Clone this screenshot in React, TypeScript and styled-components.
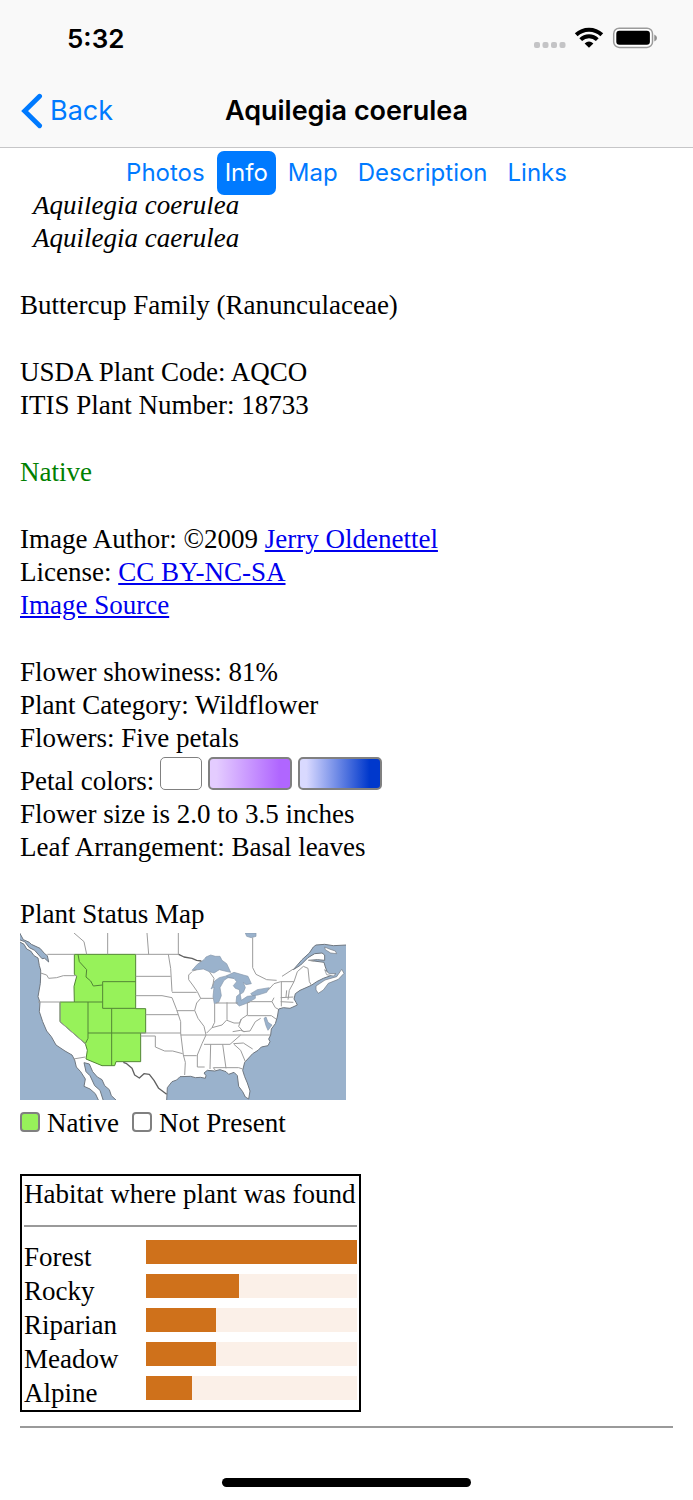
import React from "react";
import styled, { createGlobalStyle } from "styled-components";

const GlobalStyle = createGlobalStyle`
  *, *::before, *::after { box-sizing: border-box; }
  body { margin: 0; background: #fff; }
`;

const UI_FONT = `Inter, "Liberation Sans", sans-serif`;
const BLUE = "#007aff";

const Page = styled.div`
  display: flex;
  flex-direction: column;
  min-height: 100vh;
  background: #fff;
  color: #000;
  font-family: "Liberation Serif", "Times New Roman", serif;
  font-size: 27px;
  line-height: 33px;
`;

const TopBars = styled.div`
  position: sticky;
  top: 0;
  z-index: 1;
  background: #fff;
  font-family: ${UI_FONT};
`;

const Chrome = styled.header`
  background: #f9f9f9;
  border-bottom: 1px solid #c6c6c8;
`;

const StatusBar = styled.div`
  display: flex;
  align-items: center;
  justify-content: space-between;
  height: 76px;
  padding: 0 36px 0 67px;
`;

const Clock = styled.time`
  font-size: 26px;
  font-weight: 600;
`;

const NavBar = styled.div`
  display: grid;
  grid-template-columns: 1fr auto 1fr;
  align-items: center;
  height: 71px;
  padding: 0 21px 2px;
`;

const BackButton = styled.button`
  display: flex;
  align-items: center;
  justify-self: start;
  gap: 7px;
  padding: 0;
  border: 0;
  background: none;
  color: ${BLUE};
  font: 400 27px/33px ${UI_FONT};
  cursor: pointer;
`;

const Title = styled.h1`
  margin: 0;
  font-size: 27px;
  font-weight: 600;
`;

const Tabs = styled.nav`
  display: flex;
  justify-content: center;
  gap: 4px;
  padding: 3px 0 2px;
`;

const Tab = styled.button<{ $active?: boolean }>`
  height: 44px;
  padding: 0 8px;
  border: 0;
  border-radius: 7px;
  background: ${(p) => (p.$active ? BLUE : "transparent")};
  color: ${(p) => (p.$active ? "#fff" : BLUE)};
  font: 400 24px/44px ${UI_FONT};
  cursor: pointer;
`;

const Content = styled.main`
  flex: 1;
  margin-top: -8px;
  padding: 0 20px;
`;

const Block = styled.p`
  margin: 0 0 34px;
`;

const Synonyms = styled(Block)`
  padding-left: 13px;
  font-style: italic;
`;

const Line = styled.span`
  display: block;
`;

const NativeStatus = styled(Block)`
  color: #008000;
`;

const Link = styled.a`
  color: #0000ee;
  text-decoration: underline;
`;

const PetalRow = styled.span`
  display: flex;
  align-items: baseline;
  gap: 6px;
  padding-top: 2px;
`;

const Swatch = styled.span<{ $fill: string; $wide?: boolean }>`
  width: ${(p) => (p.$wide ? 84 : 42)}px;
  height: 33px;
  border: ${(p) => (p.$wide ? 2 : 1)}px solid #808080;
  border-radius: 5px;
  background: ${(p) => p.$fill};
  background-origin: border-box;
`;

const StatusMap = styled.figure`
  margin: 0 0 34px;
`;

const MapDrawing = styled.svg`
  display: block;
  width: 326px;
  height: 167px;
  margin: 2px 0 7px;
`;

const Legend = styled.div`
  display: flex;
  gap: 13px;
`;

const LegendItem = styled.span`
  display: flex;
  align-items: baseline;
  gap: 7px;
`;

const Key = styled.span<{ $fill: string }>`
  width: 20px;
  height: 20px;
  border: 2px solid #808080;
  border-radius: 4px;
  background: ${(p) => p.$fill};
`;

const HabitatTable = styled.table`
  width: 341px;
  padding: 2px 2px 0;
  border: 2px solid #000;
  border-spacing: 0;
  table-layout: fixed;

  th {
    padding: 0;
    font-weight: 400;
    text-align: left;
    white-space: nowrap;
  }
  td {
    padding: 0;
    vertical-align: top;
  }
`;

const NameColumn = styled.col`
  width: 122px;
`;

const HabitatName = styled.th`
  height: 34px;
  line-height: 34px;
`;

const Rule = styled.hr`
  height: 2px;
  margin: 14px 0 13px;
  border: 0;
  border-top: 2px solid #9a9a9a;
`;

const Track = styled.div`
  height: 24px;
  background: #fbf0e8;
`;

const Fill = styled.div`
  height: 100%;
  background: #cf711b;
`;

const HomeArea = styled.footer`
  display: flex;
  justify-content: center;
  padding-bottom: 13px;
`;

const HomeIndicator = styled.div`
  width: 36%;
  height: 9px;
  border-radius: 5px;
  background: #000;
`;

const habitats = [
  { name: "Forest", share: 100 },
  { name: "Rocky", share: 44 },
  { name: "Riparian", share: 33 },
  { name: "Meadow", share: 33 },
  { name: "Alpine", share: 22 },
];

const StatusIcons = () => (
  <svg width="124" height="24" viewBox="0 -1 124 24" aria-hidden="true">
    <g fill="#c4c4c6">
      <rect x="1" y="15" width="6" height="6" rx="2" />
      <rect x="9.500" y="15" width="6" height="6" rx="2" />
      <rect x="18" y="15" width="6" height="6" rx="2" />
      <rect x="26.500" y="15" width="6" height="6" rx="2" />
    </g>
    <g fill="none" stroke="#000" strokeWidth="4">
      <path d="M43.200 7.800A18.600 18.600 0 0 1 68.800 7.800" />
      <path d="M47.700 12.600A12 12 0 0 1 64.300 12.600" />
    </g>
    <path d="M51.600 16.600Q56 12.600 60.400 16.600L56 20.800Z" />
    <rect x="80.700" y="1.200" width="38.800" height="19.200" rx="5.500" fill="#fff" stroke="#9b9b9b" strokeWidth="1.500" />
    <rect x="83.300" y="3.800" width="33.600" height="14" rx="3" />
    <path d="M121.300 7.500Q124 8.500 124 11T121.300 14.500Z" fill="#8f8f8f" />
  </svg>
);

const BackIcon = () => (
  <svg width="22" height="36" viewBox="0 0 22 36" fill="none" aria-hidden="true">
    <path d="M18.600 3.200L3.600 18L18.600 32.800" stroke={BLUE} strokeWidth="4.800" strokeLinecap="round" strokeLinejoin="miter" />
  </svg>
);

const UsMap = () => (
  <MapDrawing viewBox="30 24 978 501" preserveAspectRatio="none" role="img" aria-label="Plant status map of the United States">
    <rect x="30" y="24" width="978" height="501" fill="#fff" />
    {/* oceans and gulfs */}
    <g fill="#9ab2cc" stroke="#6f7780" strokeWidth="3" strokeLinejoin="round">
      <path d="M28 50L42 58L50 72L62 78L72 92L84 99L88 122L92 135L92 150L91 175L84 215L90 232L88 260L98 290L110 318L124 335L138 360L165 378L186 390L194 405L199 426L212 440L226 462L222 484L240 492L256 506L266 527H28Z" />
      <path d="M28 22L40 44L58 52L64 58L90 70L104 86L112 92L116 111L104 100L96 101L74 76L58 68L44 50L28 44Z" />
      <path d="M222 413L238 417L248 440L262 456L276 464L284 482L298 494L304 512L320 527H280L270 496L254 482L240 452L228 440Z" />
      <path d="M470 527L472 488L486 470L500 465L510 455L542 454L556 458L572 457L586 460L588 452L582 444L592 436L614 438L630 434L648 440L656 448L672 442L682 452L686 484L698 500L706 516L716 522L720 498L712 474L704 455L698 436L704 412L728 386L744 376L754 366L774 362L780 350L776 342L782 330L784 312L796 296L802 276L806 252L820 248L840 250L862 240L858 232L852 222L856 206L870 196L904 181L920 170L940 160L962 152L952 142L946 126L942 112L912 108L896 106L922 104L944 106L944 90L936 84L914 86L894 98L872 120L850 134L876 104L898 84L910 66L918 60L944 58L970 62L1010 60V527Z" />
    </g>
    {/* Great Lakes, James Bay and the Chesapeake */}
    <g fill="#9ab2cc" stroke="#8797aa" strokeWidth="2" strokeLinejoin="round">
      <path d="M546 136L562 118L582 104L588 96L602 90L616 94L630 94L636 106L650 116L662 142L644 138L628 134L612 144L598 140L580 132L564 134Z" />
      <path d="M613 236L609 215L612 186L603 192L614 168L628 158L652 152L672 150L672 160L654 158L642 166L630 188L634 212L626 232Z" />
      <path d="M650 152L672 142L700 150L714 154L724 176L708 179L700 172L706 188L700 202L690 208L688 194L676 190L670 182L680 170L672 160L652 156Z" />
      <path d="M690 206L680 214L678 234L688 243L712 234L736 220L736 211L712 214L694 226Z" />
      <path d="M722 206L742 194L778 188L770 202L744 210L728 212Z" />
      <path d="M706 24H738V34L724 38L710 34Z" />
      <path d="M774 316L768 302L762 280L768 276L774 292L786 300L780 308Z" />
    </g>
    <g fill="#fff" stroke="#6f7780" strokeWidth="2">
      <path d="M944 66L958 72L976 78L980 86L962 84L946 74Z" />
      <path d="M944 134L958 146L978 146L970 153L950 149Z" />
      <path d="M918 183L945 165L980 155L995 133L1002 145L985 163L955 175L940 195L925 205L918 195Z" />
    </g>
    {/* states where the plant is native */}
    <g fill="#97f25a" stroke="#528536" strokeWidth="3">
      <path d="M193 88H377V251H407V324H392V410H318L314 422H276L228 402L232 376L226 356L150 290V231H193L192 184L200 154L193 148Z" />
      <path fill="none" d="M204 88L208 110L230 134L228 156L242 168L250 183L277 180M377 170H278V250H377M193 231H277M234 231V340L226 356M305 251V422M234 324H392" />
    </g>
    {/* state, provincial and national borders */}
    <g fill="none" stroke="#9c9c9c" strokeWidth="3" strokeLinejoin="round">
      <path d="M112 88H193M377 88H506M192 24L222 50L230 88M293 24V88M411 24L416 88M505 24V88" />
      <path d="M92 144L110 150L116 160L140 158L160 152H200M84 231H150M150 231V290L228 358M190 402L226 396" />
      <path d="M377 154H482M377 212H456L486 218M407 269H504M392 324H512M475 88L482 130L486 200M486 202H560M486 218L500 254L512 290V324M500 257H554M392 333H436V366L464 378L488 378L518 386M512 330H588M512 324L520 390L526 412L524 450M520 392H560" />
      <path d="M546 140L536 150V164L548 180L562 200L572 220L560 234L554 256L564 280L582 304L588 330L576 356L562 390V426H584M572 220H610M548 138L560 134M598 140L612 160L608 184" />
      <path d="M614 236V292L606 308L590 324M651 232V284L636 300L606 308M618 234H684M651 286L672 294L688 294L694 282L712 270V234L722 230H786L796 248L804 252M712 272H784M784 272L798 282M694 282L686 304L700 320L720 318L736 290L752 280M588 330H780M582 358H660L692 330M602 358L600 432M638 358L648 430M616 436L610 428H686L698 432M672 358L692 376L706 410M670 356L700 354L728 372M668 320L692 316L704 320M814 170V244M852 170L838 196L834 224M812 170H852M812 218L850 216M812 230L850 232M852 170L862 140L880 124L894 130L898 170L904 180M830 196L828 216M786 230L792 218M774 196L792 176L812 170" />
      <path d="M728 38V128L738 148L770 164L800 166M816 154L850 132M912 108L896 106" />
      <path stroke="#606060" strokeWidth="4" d="M340 412L350 416L366 430L374 450L388 459L402 446L418 448L432 466L446 490L470 508M506 88L522 96L546 100L560 106L574 108" />
    </g>
  </MapDrawing>
);

export default function App() {
  return (
    <Page>
      <GlobalStyle />
      <TopBars>
        <Chrome>
          <StatusBar>
            <Clock>5:32</Clock>
            <StatusIcons />
          </StatusBar>
          <NavBar>
            <BackButton type="button">
              <BackIcon />
              Back
            </BackButton>
            <Title>Aquilegia coerulea</Title>
          </NavBar>
        </Chrome>
        <Tabs>
          <Tab type="button">Photos</Tab>
          <Tab type="button" $active aria-current="page">Info</Tab>
          <Tab type="button">Map</Tab>
          <Tab type="button">Description</Tab>
          <Tab type="button">Links</Tab>
        </Tabs>
      </TopBars>

      <Content>
        <Synonyms>
          <Line>Aquilegia coerulea</Line>
          <Line>Aquilegia caerulea</Line>
        </Synonyms>
        <Block>Buttercup Family (Ranunculaceae)</Block>
        <Block>
          <Line>USDA Plant Code: AQCO</Line>
          <Line>ITIS Plant Number: 18733</Line>
        </Block>
        <NativeStatus>Native</NativeStatus>
        <Block>
          <Line>Image Author: ©2009 <Link href="#author">Jerry Oldenettel</Link></Line>
          <Line>License: <Link href="#license">CC BY-NC-SA</Link></Line>
          <Line><Link href="#source">Image Source</Link></Line>
        </Block>
        <Block>
          <Line>Flower showiness: 81%</Line>
          <Line>Plant Category: Wildflower</Line>
          <Line>Flowers: Five petals</Line>
          <PetalRow>
            Petal colors:
            <Swatch $fill="#fff" />
            <Swatch $wide $fill="linear-gradient(to right, #e4ccff 10%, #b066ff 85%)" />
            <Swatch $wide $fill="linear-gradient(to right, #d9d9ff 10%, #0038cc 85%)" />
          </PetalRow>
          <Line>Flower size is 2.0 to 3.5 inches</Line>
          <Line>Leaf Arrangement: Basal leaves</Line>
        </Block>
        <StatusMap>
          <figcaption>Plant Status Map</figcaption>
          <UsMap />
          <Legend>
            <LegendItem><Key $fill="#97f25a" />Native</LegendItem>
            <LegendItem><Key $fill="#fff" />Not Present</LegendItem>
          </Legend>
        </StatusMap>
        <HabitatTable>
          <colgroup>
            <NameColumn />
            <col />
          </colgroup>
          <thead>
            <tr>
              <th colSpan={2}>
                Habitat where plant was found
                <Rule />
              </th>
            </tr>
          </thead>
          <tbody>
            {habitats.map((h) => (
              <tr key={h.name}>
                <HabitatName scope="row">{h.name}</HabitatName>
                <td>
                  <Track>
                    <Fill style={{ width: `${h.share}%` }} />
                  </Track>
                </td>
              </tr>
            ))}
          </tbody>
        </HabitatTable>
        <Rule />
      </Content>
      <HomeArea>
        <HomeIndicator />
      </HomeArea>
    </Page>
  );
}
